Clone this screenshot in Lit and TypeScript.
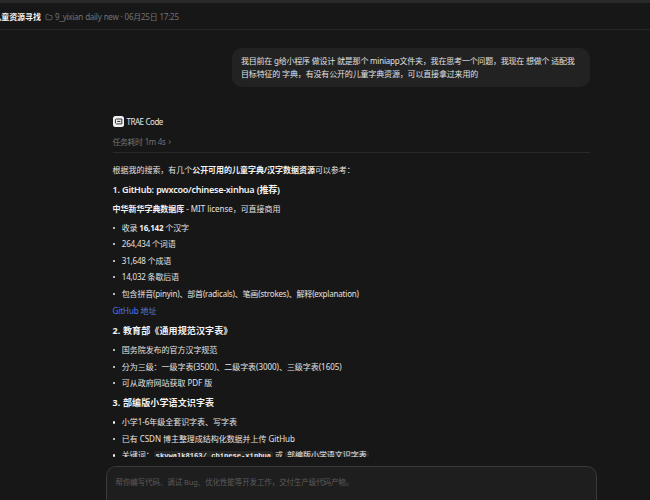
import { LitElement, html, css, svg } from 'lit';
import { customElement } from 'lit/decorators.js';

const folderIcon = svg`
  <path d="M1 2.2c0-.5.3-.8.8-.8h1.4l.9 1h2.1c.5 0 .8.3.8.8v2.8c0 .5-.3.8-.8.8H1.8c-.5 0-.8-.3-.8-.8z"
    fill="none" stroke="currentColor" stroke-width=".7" />
`;

@customElement('chat-header')
export class ChatHeader extends LitElement {
  static styles = css`
    :host {
      display: flex;
      align-items: center;
      height: 26px;
      box-sizing: border-box;
      border-bottom: 1px solid #262626;
      color: #737373;
      white-space: nowrap;
      overflow: hidden;
    }
    .title {
      display: flex;
      justify-content: flex-end;
      width: 41px;
      overflow: hidden;
      color: #f2f2f2;
      font-weight: 700;
      font-size: 8px;
    }
    .folder { width: 8px; height: 8px; margin: 0 2px 0 4px; }
    .meta { font-size: 8px; letter-spacing: -0.25px; word-spacing: 0.3px; }
  `;

  render() {
    return html`
      <div class="title">儿童资源寻找</div>
      <svg class="folder" viewBox="0 0 8 8">${folderIcon}</svg>
      <div class="meta">9_yixian daily new · 06月25日 17:25</div>
    `;
  }
}

@customElement('chat-answer')
export class ChatAnswer extends LitElement {
  static styles = css`
    :host { display: block; color: #e2e2e2; }
    .agent {
      display: flex;
      align-items: center;
      gap: 3px;
      height: 13px;
      color: #e6e6e6;
      letter-spacing: -0.52px;
      word-spacing: 0.5px;
    }
    .logo { width: 11px; height: 11px; }
    .cost {
      display: flex;
      align-items: center;
      gap: 3px;
      height: 24px;
      padding-top: 3px;
      box-sizing: border-box;
      color: #737373;
      letter-spacing: -0.5px;
      word-spacing: 0.5px;
    }
    .chevron { width: 4px; height: 6px; }
    .rule { height: 1px; margin-bottom: 9px; background: #292929; }
    p { margin: 0; height: 16px; line-height: 16px; }
    h3 {
      margin: 0;
      height: 16px;
      line-height: 16px;
      font-size: 9px;
      font-weight: 700;
      letter-spacing: 0.12px;
      color: #f2f2f2;
    }
    h3.latin { font-weight: 600; letter-spacing: -0.25px; word-spacing: 0.3px; }
    b { color: #f2f2f2; }
    ul { margin: 0; padding: 0; list-style: none; }
    li { display: flex; align-items: center; height: 16.5px; line-height: 16.5px; white-space: nowrap; }
    li::before {
      content: '';
      width: 2.2px;
      height: 2.2px;
      margin: 0 6.4px 0 0.6px;
      border-radius: 50%;
      background: #f0f0f0;
    }
    li.tight { letter-spacing: -0.18px; }
    a { color: #4a78ee; }
    code {
      padding: 1px 2px;
      border-radius: 2px;
      background: #262626;
      color: #ececec;
      font-family: 'Liberation Mono', 'Noto Sans CJK SC', monospace;
      font-size: 7.2px;
      font-weight: 700;
    }
    code.cjk { font-size: 8px; font-weight: 400; padding: 0 2px; }
    .intro { margin-bottom: 4px; }
    .source { margin: 3px 0 2.5px; }
    .link { margin: 1px 0 3.5px; letter-spacing: -0.1px; }
    h3 + ul { margin: 3.5px 0 3.25px; }
  `;

  render() {
    return html`
      <div class="agent">
        <svg class="logo" viewBox="0 0 11 11">
          <rect x="0" y="0" width="11" height="11" rx="2.5" fill="#f2f2f2" />
          <path d="M3.5 3h5.3v4.9h-5.4L2.4 7V3.6z" fill="none" stroke="#1a1a1a" stroke-width=".9" />
          <path d="M4.2 5.4h3.2" stroke="#1a1a1a" stroke-width="1" />
        </svg>
        <span>TRAE Code</span>
      </div>
      <div class="cost">
        <span>任务耗时 1m 4s</span>
        <svg class="chevron" viewBox="0 0 4 6">
          <path d="M1 1.3 2.6 3 1 4.7" fill="none" stroke="currentColor" stroke-width=".9" />
        </svg>
      </div>
      <div class="rule"></div>

      <p class="intro">根据我的搜索，有几个<b>公开可用的儿童字典/汉字数据资源</b>可以参考：</p>
      <h3 class="latin">1. GitHub: pwxcoo/chinese-xinhua (推荐)</h3>
      <p class="source"><b>中华新华字典数据库</b> - MIT license，可直接商用</p>
      <ul>
        <li class="tight"><span>收录 <b>16,142</b> 个汉字</span></li>
        <li class="tight"><span>264,434 个词语</span></li>
        <li class="tight"><span>31,648 个成语</span></li>
        <li class="tight"><span>14,032 条歇后语</span></li>
        <li class="tight"><span>包含拼音(pinyin)、部首(radicals)、笔画(strokes)、解释(explanation)</span></li>
      </ul>
      <p class="link"><a>GitHub 地址</a></p>

      <h3>2. 教育部《通用规范汉字表》</h3>
      <ul>
        <li><span>国务院发布的官方汉字规范</span></li>
        <li><span>分为三级：一级字表(3500)、二级字表(3000)、三级字表(1605)</span></li>
        <li><span>可从政府网站获取 PDF 版</span></li>
      </ul>

      <h3>3. 部编版小学语文识字表</h3>
      <ul>
        <li><span>小学1-6年级全套识字表、写字表</span></li>
        <li><span>已有 CSDN 博主整理成结构化数据并上传 GitHub</span></li>
        <li><span>关键词：<code>skywalk8163/ chinese-xinhua</code> 或 <code class="cjk">部编版小学语文识字表</code></span></li>
      </ul>
    `;
  }
}

@customElement('app-root')
export class AppRoot extends LitElement {
  static styles = css`
    :host {
      display: flex;
      flex-direction: column;
      width: 650px;
      height: 500px;
      overflow: hidden;
      background: #171717;
      font-family: 'Noto Sans', 'Noto Sans CJK SC', sans-serif;
      font-size: 8px;
      letter-spacing: -0.04px;
    }
    .strip { flex: none; height: 3px; background: #292929; }
    chat-header { flex: none; margin-top: 1px; }
    .thread {
      flex: none;
      height: 427px;
      padding: 18px 60px 0 112.6px;
      box-sizing: border-box;
      overflow: hidden;
    }
    .bubble {
      width: 358px;
      height: 39px;
      margin: 0 0 28px auto;
      padding: 7px 9px;
      box-sizing: border-box;
      border-radius: 10px;
      background: #222;
      color: #e0e0e0;
      line-height: 12.5px;
      letter-spacing: -0.16px;
      white-space: nowrap;
    }
    .bubble .mixed { letter-spacing: -0.21px; }
    .composer {
      flex: none;
      height: 50px;
      margin: 9px 53px 0 106px;
      padding: 8.5px;
      box-sizing: border-box;
      border: 1px solid #3a3a3a;
      border-radius: 10px;
      background: #1e1e1e;
      color: #5c5c5c;
      font-size: 7.5px;
      letter-spacing: -0.1px;
      line-height: 12px;
    }
  `;

  render() {
    return html`
      <div class="strip"></div>
      <chat-header></chat-header>
      <main class="thread">
        <div class="bubble">
          <span class="mixed">我目前在 g给小程序 做设计 就是那个 miniapp文件夹，我在思考一个问题，我现在 想做个 适配我</span><br />
          目标特征的 字典，有没有公开的儿童字典资源，可以直接拿过来用的
        </div>
        <chat-answer></chat-answer>
      </main>
      <div class="composer">帮你编写代码、调试 Bug、优化性能等开发工作，交付生产级代码产物。</div>
    `;
  }
}
